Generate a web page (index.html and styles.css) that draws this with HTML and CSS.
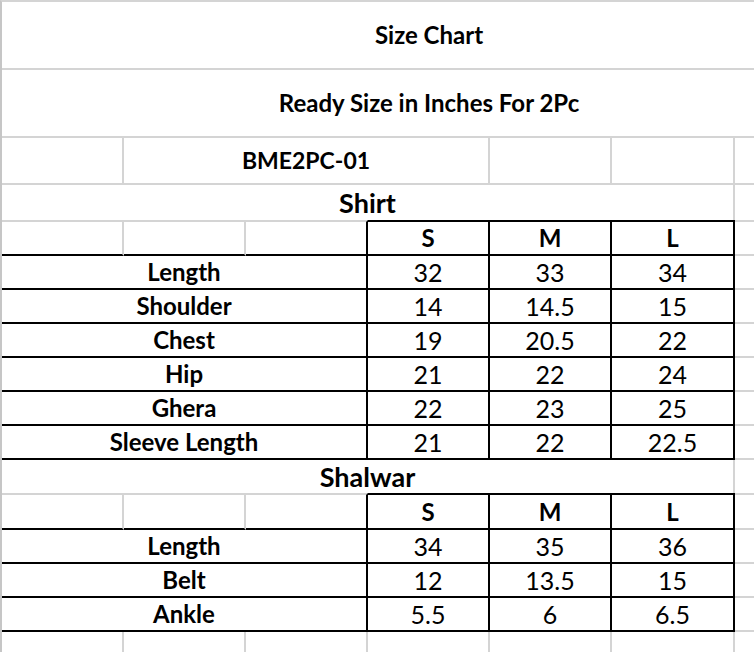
FILE: index.html
```html
<!DOCTYPE html>
<html lang="en">
<head>
<meta charset="utf-8">
<title>Size Chart</title>
<link rel="stylesheet" href="styles.css">
</head>
<body>
<div class="sheet">
  <span class="marker marker-top"></span>
  <span class="marker marker-belt"></span>

  <div class="cell full title">Size Chart</div>
  <div class="cell full title">Ready Size in Inches For 2Pc</div>

  <div class="cell"></div>
  <div class="cell span3 code">BME2PC-01</div>
  <div class="cell"></div>
  <div class="cell"></div>
  <div class="cell edge"></div>

  <div class="cell span6 section">Shirt</div>
  <div class="cell edge open"></div>

  <div class="cell top-gray line-black"></div>
  <div class="cell top-gray line-black"></div>
  <div class="cell top-gray line-black right-black"></div>
  <div class="cell head">S</div>
  <div class="cell head">M</div>
  <div class="cell head">L</div>
  <div class="cell edge top-gray"></div>

  <div class="cell span3 label">Length</div>
  <div class="cell num">32</div><div class="cell num">33</div><div class="cell num">34</div>
  <div class="cell edge"></div>

  <div class="cell span3 label">Shoulder</div>
  <div class="cell num">14</div><div class="cell num">14.5</div><div class="cell num">15</div>
  <div class="cell edge"></div>

  <div class="cell span3 label">Chest</div>
  <div class="cell num">19</div><div class="cell num">20.5</div><div class="cell num">22</div>
  <div class="cell edge"></div>

  <div class="cell span3 label">Hip</div>
  <div class="cell num">21</div><div class="cell num">22</div><div class="cell num">24</div>
  <div class="cell edge"></div>

  <div class="cell span3 label">Ghera</div>
  <div class="cell num">22</div><div class="cell num">23</div><div class="cell num">25</div>
  <div class="cell edge"></div>

  <div class="cell span3 label">Sleeve Length</div>
  <div class="cell num">21</div><div class="cell num">22</div><div class="cell num">22.5</div>
  <div class="cell edge"></div>

  <div class="cell span6 section">Shalwar</div>
  <div class="cell edge open"></div>

  <div class="cell top-gray line-black"></div>
  <div class="cell top-gray line-black"></div>
  <div class="cell top-gray line-black right-black"></div>
  <div class="cell head">S</div>
  <div class="cell head">M</div>
  <div class="cell head">L</div>
  <div class="cell edge top-gray"></div>

  <div class="cell span3 label">Length</div>
  <div class="cell num">34</div><div class="cell num">35</div><div class="cell num">36</div>
  <div class="cell edge"></div>

  <div class="cell span3 label">Belt</div>
  <div class="cell num">12</div><div class="cell num">13.5</div><div class="cell num">15</div>
  <div class="cell edge"></div>

  <div class="cell span3 label">Ankle</div>
  <div class="cell num">5.5</div><div class="cell num">6</div><div class="cell num">6.5</div>
  <div class="cell edge"></div>

  <div class="cell open"></div>
  <div class="cell open"></div>
  <div class="cell open"></div>
  <div class="cell open"></div>
  <div class="cell open"></div>
  <div class="cell open"></div>
  <div class="cell edge open"></div>
</div>
</body>
</html>
```

FILE: styles.css
```css
html, body {
  margin: 0;
  padding: 0;
  background: #ffffff;
}

.sheet {
  position: relative;
  width: 754px;
  height: 652px;
  box-sizing: border-box;
  border-left: 2px solid #c6c6c6;
  border-top: 2px solid #d4d4d4;
  display: grid;
  grid-template-columns: 122px 122px 122px 122px 122px 123px 1fr;
  grid-template-rows: 68px 68px 47px 35px 36px repeat(6, 34px) 33px 37px repeat(3, 34px) 20px;
  font-family: Lato, "Open Sans", "DejaVu Sans", sans-serif;
  font-size: 24px;
  color: #000000;
  overflow: hidden;
}

.cell {
  box-sizing: border-box;
  border-right: 2px solid #d4d4d4;
  border-bottom: 2px solid #d4d4d4;
  display: flex;
  align-items: center;
  justify-content: center;
  white-space: nowrap;
  line-height: 1;
}

.full {
  grid-column: 1 / -1;
  border-right: none;
  padding-left: 102px;
}

.title {
  font-weight: 700;
  font-size: 24px;
}

.span3 {
  grid-column: span 3;
}

.span6 {
  grid-column: span 6;
}

.code {
  font-weight: 700;
  font-size: 23px;
}

.section {
  font-weight: 700;
  font-size: 27px;
  border-bottom: none;
}

.edge {
  border-right: none;
}

.open {
  border-bottom: none;
}

.top-gray {
  border-top: 2px solid #d4d4d4;
}

.line-black {
  border-bottom-color: #000000;
}

.right-black {
  border-right-color: #000000;
}

.head {
  font-weight: 700;
  border-top: 2px solid #000000;
  border-right-color: #000000;
  border-bottom-color: #000000;
}

.label {
  font-weight: 700;
  font-size: 24px;
  border-right-color: #000000;
  border-bottom-color: #000000;
}

.num {
  font-weight: 400;
  font-size: 25px;
  border-right-color: #000000;
  border-bottom-color: #000000;
}

.marker {
  position: absolute;
  left: -2px;
  width: 2px;
  background: #217346;
}

.marker-top {
  top: 131px;
  height: 7px;
}

.marker-belt {
  top: 561px;
  height: 34px;
}
```
